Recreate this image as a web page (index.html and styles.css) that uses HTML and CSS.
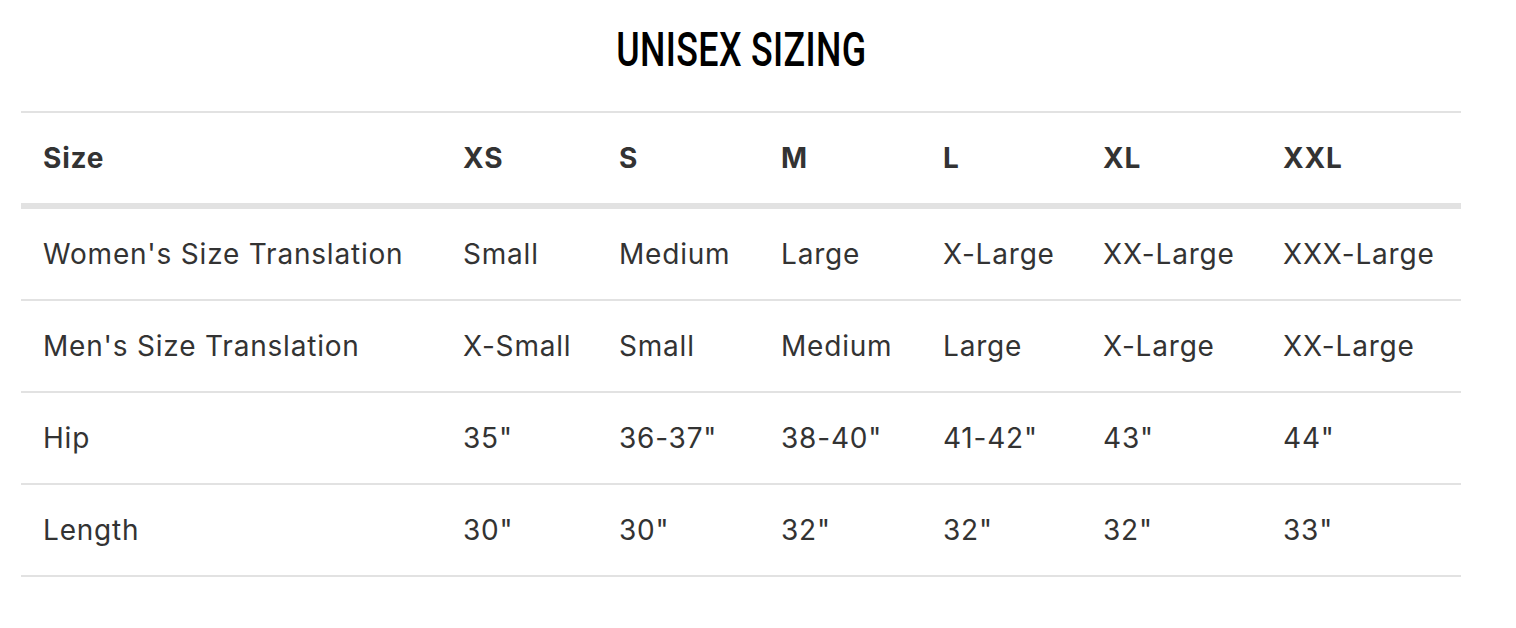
FILE: index.html
```html
<!DOCTYPE html>
<html lang="en">
<head>
<meta charset="utf-8">
<title>Unisex Sizing</title>
<link rel="stylesheet" href="styles.css">
</head>
<body>
<div class="wrap">
  <h2 class="title"><span class="title-text">UNISEX SIZING</span></h2>
  <table class="sizes">
    <colgroup>
      <col class="c1"><col class="c2"><col class="c3"><col class="c4"><col class="c5"><col class="c6"><col class="c7">
    </colgroup>
    <thead>
      <tr><th>Size</th><th>XS</th><th>S</th><th>M</th><th>L</th><th>XL</th><th>XXL</th></tr>
    </thead>
    <tbody>
      <tr><td>Women's Size Translation</td><td>Small</td><td>Medium</td><td>Large</td><td>X-Large</td><td>XX-Large</td><td>XXX-Large</td></tr>
      <tr><td>Men's Size Translation</td><td>X-Small</td><td>Small</td><td>Medium</td><td>Large</td><td>X-Large</td><td>XX-Large</td></tr>
      <tr><td>Hip</td><td>35"</td><td>36-37"</td><td>38-40"</td><td>41-42"</td><td>43"</td><td>44"</td></tr>
      <tr><td>Length</td><td>30"</td><td>30"</td><td>32"</td><td>32"</td><td>32"</td><td>33"</td></tr>
    </tbody>
  </table>
</div>
</body>
</html>
```
FILE: styles.css
```css
html, body { margin: 0; padding: 0; background: #fff; }
body { font-family: Inter, "Noto Sans", sans-serif; color: #333; }
.wrap { width: 1440px; padding: 0 21px; }
.title {
  margin: 0;
  height: 111px;
  display: flex;
  justify-content: center;
  align-items: flex-start;
}
.title-text {
  display: inline-block;
  font-family: Roboto, "Liberation Sans", sans-serif;
  font-weight: 500;
  font-size: 49px;
  line-height: 1;
  color: #000;
  margin-top: 25px;
  transform: scaleX(0.73);
  letter-spacing: 0.5px;
}
.sizes {
  width: 1440px;
  border-collapse: collapse;
  table-layout: fixed;
  border-top: 2px solid #e2e2e2;
}
.c1 { width: 420px; }
.c2 { width: 156px; }
.c3 { width: 162px; }
.c4 { width: 162px; }
.c5 { width: 160px; }
.c6 { width: 180px; }
.c7 { width: 200px; }
.sizes th, .sizes td {
  text-align: left;
  padding: 0 0 0 22px;
  height: 90px;
  vertical-align: middle;
  font-size: 28px;
  letter-spacing: 0.8px;
  white-space: nowrap;
}
.sizes th { font-weight: 700; border-bottom: 6px solid #e2e2e2; }
.sizes td { font-weight: 400; border-bottom: 2px solid #e2e2e2; }
```
